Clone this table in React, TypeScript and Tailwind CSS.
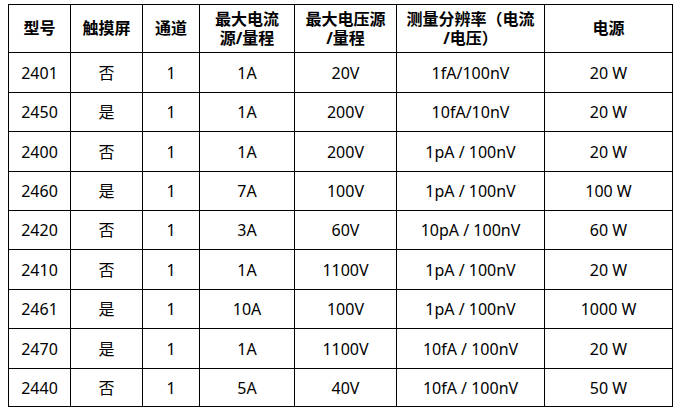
const headers: React.ReactNode[] = [
	"型号",
	"触摸屏",
	"通道",
	<>
		最大电流
		<br />
		源/量程
	</>,
	<>
		最大电压源
		<br />
		/量程
	</>,
	<>
		测量分辨率（电流
		<br />
		/电压）
	</>,
	"电源",
];

const rows: { cells: string[]; h: string }[] = [
	{ cells: ["2401", "否", "1", "1A", "20V", "1fA/100nV", "20 W"], h: "h-[40px]" },
	{ cells: ["2450", "是", "1", "1A", "200V", "10fA/10nV", "20 W"], h: "h-[39px]" },
	{ cells: ["2400", "否", "1", "1A", "200V", "1pA / 100nV", "20 W"], h: "h-[40px]" },
	{ cells: ["2460", "是", "1", "7A", "100V", "1pA / 100nV", "100 W"], h: "h-[39px]" },
	{ cells: ["2420", "否", "1", "3A", "60V", "10pA / 100nV", "60 W"], h: "h-[39px]" },
	{ cells: ["2410", "否", "1", "1A", "1100V", "1pA / 100nV", "20 W"], h: "h-[40px]" },
	{ cells: ["2461", "是", "1", "10A", "100V", "1pA / 100nV", "1000 W"], h: "h-[39px]" },
	{ cells: ["2470", "是", "1", "1A", "1100V", "10fA / 100nV", "20 W"], h: "h-[40px]" },
	{ cells: ["2440", "否", "1", "5A", "40V", "10fA / 100nV", "50 W"], h: "h-[38px]" },
];

export default function App() {
	return (
		<div className="h-[417px] w-[691px] bg-white pl-[8px] pt-[4px] font-['Noto_Sans','Noto_Sans_CJK_SC',sans-serif] text-[16px] text-black">
			<div className="grid w-[665px] grid-cols-[62px_72px_57px_95px_102px_148px_128px] border-l border-t border-black">
				{headers.map((h, i) => (
					<div
						key={i}
						className="flex h-[48px] items-center justify-center border-b border-r border-black text-center font-bold leading-[19px]"
					>
						<span>{h}</span>
					</div>
				))}
				{rows.map((r) =>
					r.cells.map((c, i) => (
						<div
							key={r.cells[0] + i}
							className={`flex ${r.h} items-center justify-center border-b border-r border-black leading-none`}
						>
							{c}
						</div>
					)),
				)}
			</div>
		</div>
	);
}
